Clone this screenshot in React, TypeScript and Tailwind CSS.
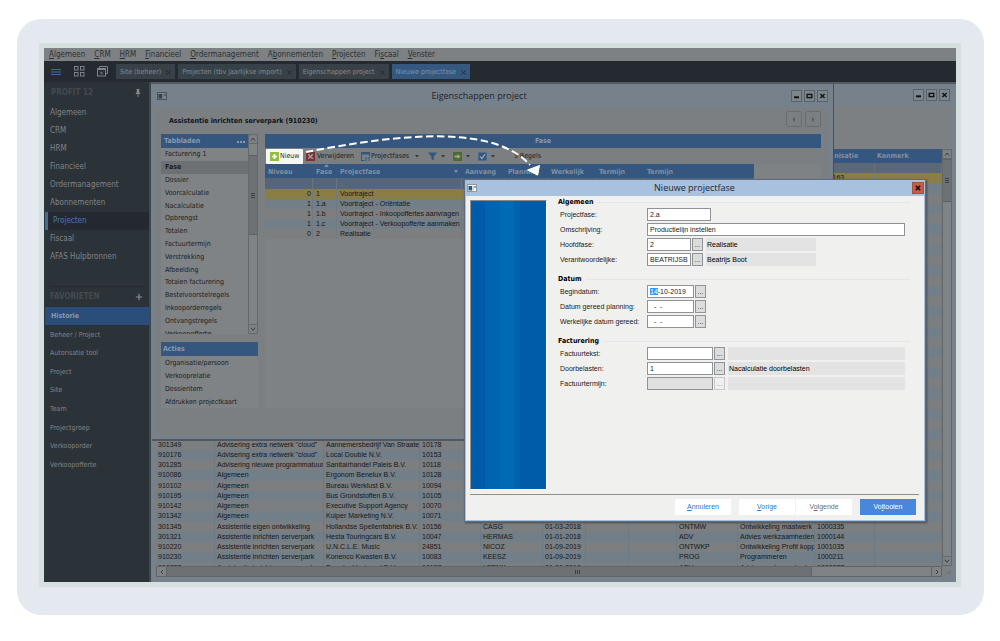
import { useEffect, useRef } from "react";
import type { ReactNode } from "react";

const menuItems: [string, string, string][] = [
  ["", "A", "lgemeen"],
  ["", "C", "RM"],
  ["", "H", "RM"],
  ["", "F", "inancieel"],
  ["", "O", "rdermanagement"],
  ["A", "b", "onnementen"],
  ["", "P", "rojecten"],
  ["Fi", "s", "caal"],
  ["", "V", "enster"],
];

const openTabs = ["Site (beheer)", "Projecten (tbv jaarlijkse import)", "Eigenschappen project", "Nieuwe projectfase"];

const navItems = ["Algemeen", "CRM", "HRM", "Financieel", "Ordermanagement", "Abonnementen", "Projecten", "Fiscaal", "AFAS Hulpbronnen"];

const favourites = ["Beheer / Project", "Autorisatie tool", "Project", "Site", "Team", "Projectgroep", "Verkooporder", "Verkoopofferte"];

const sheets = [
  "Facturering 1", "Fase", "Dossier", "Voorcalculatie", "Nacalculatie", "Opbrengst", "Totalen", "Factuurtermijn",
  "Verstrekking", "Afbeelding", "Totalen facturering", "Bestelvoorstelregels", "Inkooporderregels", "Ontvangstregels", "Verkoopofferte",
];

const actions = ["Organisatie/persoon", "Verkooprelatie", "Dossieritem", "Afdrukken projectkaart"];

const phases = [
  ["0", "1", "Voortraject"],
  ["1", "1.a", "Voortraject - Oriëntatie"],
  ["1", "1.b", "Voortraject - Inkoopoffertes aanvragen"],
  ["1", "1.c", "Voortraject - Verkoopofferte aanmaken"],
  ["0", "2", "Realisatie"],
];

const blankProjects: string[][] = Array.from({ length: 26 }, (_, i) => [
  "", "", "", "", "", "", "", "", "", "", i === 0 ? "1000163" : "", "",
]);

const projects: string[][] = [
  ...blankProjects,
  ["301349", 'Advisering extra netwerk "cloud"', "Aannemersbedrijf Van Straaten", "10178", "", "", "", "", "", "", "", ""],
  ["910176", 'Advisering extra netwerk "cloud"', "Local Double N.V.", "10153", "", "", "", "", "", "", "", ""],
  ["301285", "Advisering nieuwe programmatuur e", "Sanitairhandel Paleis B.V.", "10118", "", "", "", "", "", "", "", ""],
  ["910086", "Algemeen", "Ergonom Benelux B.V.", "10128", "", "", "", "", "", "", "", ""],
  ["910102", "Algemeen", "Bureau Werklust B.V.", "10094", "", "", "", "", "", "", "", ""],
  ["910195", "Algemeen", "Bus Grondstoffen B.V.", "10105", "", "", "", "", "", "", "", ""],
  ["910142", "Algemeen", "Executive Support Agency", "10070", "", "", "", "", "", "", "", ""],
  ["301342", "Algemeen", "Kuiper Marketing N.V.", "10071", "", "", "", "", "", "", "", ""],
  ["301345", "Assistentie eigen ontwikkeling", "Hollandse Spellenfabriek B.V.", "10156", "CASG", "01-03-2018", "", "", "ONTMW", "Ontwikkeling maatwerk", "1000335", ""],
  ["301321", "Assistentie inrichten serverpark", "Hesta Touringcars B.V.", "10047", "HERMAS", "01-01-2018", "", "", "ADV", "Advies werkzaamheden", "1000144", ""],
  ["910220", "Assistentie inrichten serverpark", "U.N.C.L.E. Music", "24851", "NICOZ", "01-09-2019", "", "", "ONTWKP", "Ontwikkeling Profit kopp", "1001035", ""],
  ["910230", "Assistentie inrichten serverpark", "Konenco Kwasten B.V.", "10083", "KEESZ", "01-09-2019", "", "", "PROG", "Programmeren", "1000211", ""],
  ["910232", "Assistentie inrichten serverpark", "Broeder Vastgoed B.V.", "10157", "LEENK", "01-09-2019", "", "", "ADV", "Advies werkzaamheden", "1000237", ""],
];

function WindowIcon({ bright }: { bright?: boolean }) {
  return (
    <svg viewBox="0 0 10 8" className="h-2 w-[10px] shrink-0" aria-hidden="true">
      <rect x="0.5" y="0.5" width="9" height="7" fill={bright ? "#f4f6f8" : "#80868b"} stroke={bright ? "#8d98a5" : "#4d5358"} />
      <rect x="1.5" y="2" width="3.5" height="4.5" fill={bright ? "#2e5878" : "#2d4350"} />
      <rect x="5.5" y="2" width="1" height="4.5" fill={bright ? "#9cb7cf" : "#5d7584"} />
      <rect x="7.5" y="2" width="1" height="2" fill={bright ? "#555" : "#3a3f42"} />
    </svg>
  );
}

function WindowButtons() {
  const cls = "flex h-3 w-[11px] items-center justify-center border border-[#59626b] bg-[#7d858d]";
  return (
    <div className="flex gap-[2px]">
      <button aria-label="Minimaliseren" className={cls}>
        <svg viewBox="0 0 9 10" className="h-[10px] w-[9px]"><path d="M2 6.3h5" stroke="#121416" strokeWidth="2" /></svg>
      </button>
      <button aria-label="Maximaliseren" className={cls}>
        <svg viewBox="0 0 9 10" className="h-[10px] w-[9px]"><rect x="2.2" y="3.4" width="4.6" height="3.2" fill="none" stroke="#121416" strokeWidth="1.4" /></svg>
      </button>
      <button aria-label="Sluiten" className={cls}>
        <svg viewBox="0 0 9 10" className="h-[10px] w-[9px]"><path d="M2.4 3l4.2 4M6.6 3l-4.2 4" stroke="#121416" strokeWidth="1.5" /></svg>
      </button>
    </div>
  );
}

function Chevron({ dir }: { dir: "up" | "down" | "left" | "right" }) {
  const paths = { up: "M2 5.5l2-2.5 2 2.5", down: "M2 2.8l2 2.5 2-2.5", left: "M5 2L3 4l2 2", right: "M3 2l2 2-2 2" };
  return <svg viewBox="0 0 8 8" className="h-2 w-2"><path d={paths[dir]} fill="none" stroke="#3b4044" strokeWidth="1" /></svg>;
}

function Caret() {
  return <svg viewBox="0 0 4 3" className="h-[3px] w-1" aria-hidden="true"><path d="M0 0h4L2 2.6z" fill="#33383c" /></svg>;
}

function VerticalScroll({ thumb, before }: { thumb: string; before: string }) {
  return (
    <div className="flex w-[10px] shrink-0 flex-col border-x border-[#65696c] bg-[#808385]">
      <button aria-label="Omhoog" className="flex h-[10px] items-center justify-center border-y border-[#65696c] bg-[#7e8183]"><Chevron dir="up" /></button>
      <div className={before} />
      <div className={`flex flex-col items-center justify-center gap-px border-y border-[#5b6063] bg-[#6d7173] ${thumb}`}>
        <i className="h-px w-1 bg-[#3b4044]" />
        <i className="h-px w-1 bg-[#3b4044]" />
        <i className="h-px w-1 bg-[#3b4044]" />
      </div>
      <div className="flex-1" />
      <button aria-label="Omlaag" className="flex h-[10px] items-center justify-center border-y border-[#65696c] bg-[#7e8183]"><Chevron dir="down" /></button>
    </div>
  );
}

function Sidebar() {
  return (
    <nav className="flex w-[107px] shrink-0 flex-col border-r-2 border-[#3f474e] bg-[#2b3238] pl-px text-[8px] text-[#818487]">
      <div className="flex h-[22px] items-center justify-between pr-2 pl-[6px] font-bold text-[#444b52]">
        PROFIT 12
        <svg viewBox="0 0 6 8" className="h-2 w-[6px]" aria-hidden="true">
          <path d="M1.5 0h3v.8H4.2V3.2L5.4 4.4v.7H.6v-.7l1.2-1.2V.8h-.3z" fill="#858a8e" />
          <path d="M3 5v3" stroke="#858a8e" strokeWidth=".9" />
        </svg>
      </div>
      <ul>
        {navItems.map((n) => (
          <li key={n}>
            <a href="#" className={n === "Projecten" ? "flex h-[18px] items-center border-l-[3px] border-[#3f6c96] bg-[#242931] pl-[5px] text-[#4a78ad]" : "flex h-[18px] items-center pl-[5px]"}>{n}</a>
          </li>
        ))}
      </ul>
      <hr className="mx-[5px] mt-5 border-[#242a30]" />
      <div className="flex h-[20px] items-center justify-between pr-[6px] pl-[5px] font-bold text-[#444b52]">
        FAVORIETEN
        <button aria-label="Favoriet toevoegen" className="flex">
          <svg viewBox="0 0 8 8" className="h-2 w-2"><path d="M4 .8v6.4M.8 4h6.4" stroke="#8b9094" strokeWidth="1.1" /></svg>
        </button>
      </div>
      <a href="#" className="flex h-[18px] items-center bg-[#2b4d79] pl-[6px] text-[7px] font-bold text-[#8d99a8]">Historie</a>
      <ul className="flex h-[149px] flex-col text-[7px]">
        {favourites.map((f) => (
          <li key={f} className="flex flex-1 items-center pt-px pl-[5px]"><a href="#">{f}</a></li>
        ))}
      </ul>
    </nav>
  );
}

function ProjectListWindow() {
  const heads = ["", "", "", "", "", "", "", "", "", "", "Organisatie", "Kenmerk"];
  return (
    <section aria-label="Projecten" className="absolute inset-0 flex flex-col border-t-2 border-[#555c63] bg-[#77818b] pr-1 pb-[5px] pl-[5px]">
      <div className="flex h-[22px] items-start justify-end pt-[5px] pr-[2px]"><WindowButtons /></div>
      <div className="flex min-h-0 flex-1 flex-col bg-[#7c8083] pt-[43px]">
        <div className="flex min-h-0 flex-1">
          <div className="min-w-0 flex-1 overflow-hidden">
            <table className="h-[424px] w-full table-fixed border-separate border-spacing-0 text-left font-['Liberation_Sans',Arial,sans-serif] text-[7px] leading-[10px] whitespace-nowrap text-[#16181a]">
              <colgroup>
                <col className="w-[59px]" /><col className="w-[109px]" /><col className="w-[96px]" /><col className="w-[61px]" />
                <col className="w-[62px]" /><col className="w-[43px]" /><col className="w-[43px]" /><col className="w-[48px]" />
                <col className="w-[61px]" /><col className="w-[77px]" /><col className="w-[60px]" /><col />
              </colgroup>
              <thead>
                <tr className="h-[14px] bg-[#34567f] font-['DejaVu_Sans_Condensed','DejaVu_Sans',sans-serif] text-[#8090a3]">
                  {heads.map((h, i) => <th key={i} className="p-0 pl-[2px] font-bold">{h}</th>)}
                </tr>
                <tr className="h-[10px] bg-[#5b6977]">
                  {heads.map((_, i) => <td key={i} className="border-r border-[#66727e] p-0" />)}
                </tr>
              </thead>
              <tbody>
                {projects.map((row, r) => (
                  <tr key={r} className={r === 0 ? "bg-[#8a7d45]" : r % 2 ? "bg-[#727e88]" : "bg-[#7c7e7f]"}>
                    {row.map((c, i) => (
                      <td key={i} className="overflow-hidden border-r border-[#6d7983] p-0 pl-[2px]">{c || "\u00a0"}</td>
                    ))}
                  </tr>
                ))}
              </tbody>
            </table>
          </div>
          <VerticalScroll before="h-0" thumb="h-[43px]" />
        </div>
        <div className="flex h-[11px]">
          <div className="flex flex-1 border border-[#606568] bg-[#808385]">
            <button aria-label="Naar links" className="flex w-[10px] items-center justify-center border-r border-[#606568]"><Chevron dir="left" /></button>
            <div className="flex min-w-0 flex-[644] border-r border-[#606568] bg-[#6d7173]">
              <div className="flex w-full items-center justify-center gap-px pl-44">
                <i className="h-1 w-px bg-[#3b4044]" />
                <i className="h-1 w-px bg-[#3b4044]" />
                <i className="h-1 w-px bg-[#3b4044]" />
              </div>
            </div>
            <div className="flex-[119]" />
            <button aria-label="Naar rechts" className="flex w-[10px] items-center justify-center border-l border-[#606568]"><Chevron dir="right" /></button>
          </div>
          <svg viewBox="0 0 10 10" className="h-[10px] w-[10px]" aria-hidden="true"><path d="M8 4v4M6 6v2M4 7v1" stroke="#6b7073" /></svg>
        </div>
      </div>
    </section>
  );
}

function PhaseToolbar() {
  return (
    <div className="flex h-4 items-center text-[7px] text-[#1b1d1f]">
      <button className="ml-px flex h-[15px] w-[37px] items-center gap-px rounded-[1px] bg-[#f6f7f5] pl-1 text-[#2a2a2a]">
        <svg viewBox="0 0 9 9" className="h-[9px] w-[9px] shrink-0"><rect width="9" height="9" rx=".5" fill="#8fc03c" /><path d="M4.5 2v5M2 4.5h5" stroke="#fff" strokeWidth="1.6" /></svg>
        Nieuw
      </button>
      <button className="ml-[3px] flex items-center gap-[2px]">
        <svg viewBox="0 0 9 9" className="h-[9px] w-[9px]"><rect width="9" height="9" fill="#7b3134" /><path d="M2.2 2.2l4.6 4.6M6.8 2.2L2.2 6.8" stroke="#9aa0a2" strokeWidth="1.5" /></svg>
        Verwijderen
      </button>
      <button className="ml-[7px] flex items-center">
        <svg viewBox="0 0 10 9" className="h-[9px] w-[10px]"><rect x=".5" y=".5" width="8" height="8" fill="#76828c" stroke="#34567f" /><path d="M.5 1.5h8" stroke="#34567f" strokeWidth="2" /><path d="M3.500 4.500h6.500v4.500H3.500z" fill="#76828c" /><path d="M4 6h6M4 8h6" stroke="#34567f" strokeDasharray="2 1" /></svg>
        Projectfases
        <span className="ml-[6px]"><Caret /></span>
      </button>
      <button aria-label="Filter" className="ml-[9px] flex items-center gap-1">
        <svg viewBox="0 0 9 9" className="h-[9px] w-[9px]"><path d="M0 .5h9L5.8 4.4V8.6L3.4 7V4.4z" fill="#34567f" /></svg>
        <Caret />
      </button>
      <button aria-label="Exporteren" className="ml-2 flex items-center gap-1">
        <svg viewBox="0 0 9 9" className="h-[9px] w-[9px]"><rect width="9" height="9" rx=".5" fill="#4c6b2e" /><path d="M1.500 4.500h3.500" stroke="#a3ab9f" strokeWidth="1.600" /><path d="M4.500 2l3 2.500-3 2.500z" fill="#a3ab9f" /></svg>
        <Caret />
      </button>
      <button aria-label="Selecteren" className="ml-2 flex items-center gap-1">
        <svg viewBox="0 0 9 9" className="h-[9px] w-[9px]"><rect x=".5" y=".5" width="8" height="8" fill="#34567f" stroke="#4c6c92" /><path d="M2 4.4l2 2.2 3-4.4" fill="none" stroke="#a3adb8" strokeWidth="1.2" /></svg>
        <Caret />
      </button>
      <span className="ml-[19px]">5 Regels</span>
    </div>
  );
}

function PhaseTable() {
  const heads = ["Niveau", "Fase", "Projectfase", "Aanvang", "Planning", "Werkelijk", "Termijn", "Termijn"];
  return (
    <div className="flex">
      <table className="w-[489px] table-fixed border-separate border-spacing-0 text-left font-['Liberation_Sans',Arial,sans-serif] text-[7px] leading-[10px] whitespace-nowrap text-[#16181a]">
        <colgroup>
          <col className="w-[48px]" /><col className="w-6" /><col className="w-[125px]" /><col className="w-[43px]" />
          <col className="w-[43px]" /><col className="w-[48px]" /><col className="w-[48px]" /><col />
        </colgroup>
        <thead>
          <tr className="h-[14px] bg-[#34567f] font-['DejaVu_Sans_Condensed','DejaVu_Sans',sans-serif] text-[#8090a3]">
            {heads.map((h, i) => (
              <th key={i} className="p-0 pt-px pl-[3px] font-bold">
                <div className="relative flex items-center justify-between pr-1">
                  {h}
                  {i === 1 && <svg viewBox="0 0 5 3" className="absolute -top-[3px] left-2 h-[3px] w-[5px]"><path d="M0 3h5L2.5 0z" fill="#8090a3" /></svg>}
                  {i === 2 && <svg viewBox="0 0 4 3" className="h-[3px] w-1"><path d="M0 0h4L2 3z" fill="#8090a3" /></svg>}
                </div>
              </th>
            ))}
          </tr>
          <tr className="h-[11px] bg-[#56667a]">
            {heads.map((_, i) => <td key={i} className="border-r border-[#6b7681] p-0" />)}
          </tr>
        </thead>
        <tbody>
          {phases.map((row, r) => (
            <tr key={r} className={r === 0 ? "bg-[#8a7d45]" : r % 2 ? "bg-[#727e88]" : "bg-[#7c7e7f]"}>
              <td className="border-r border-[#6d7983] p-0 pr-px text-right">{row[0]}</td>
              <td className="border-r border-[#6d7983] p-0 pl-[3px]">{row[1]}</td>
              <td className="border-r border-[#6d7983] p-0 pl-[3px]">{row[2]}</td>
              <td colSpan={5} className="p-0" />
            </tr>
          ))}
        </tbody>
      </table>
    </div>
  );
}

function ProjectWindow() {
  return (
    <section aria-label="Eigenschappen project" className="absolute top-0 right-[122px] left-px flex h-[359px] flex-col border-t-2 border-r border-b-2 border-t-[#555c63] border-r-[#474e54] border-b-[#50585f] bg-[#77818b] pr-[5px] pb-1 pl-1">
      <div className="flex h-6 items-center pl-px">
        <WindowIcon />
        <h1 className="flex-1 text-center font-['Open_Sans','Noto_Sans',sans-serif] text-[9px] text-[#202326]">Eigenschappen project</h1>
        <WindowButtons />
      </div>
      <div className="flex min-h-0 flex-1 flex-col bg-[#7b7f82] pr-[7px] pl-[5px]">
        <div className="flex h-[26px] items-center justify-between pl-2 text-[7px] font-bold text-[#121416]">
          Assistentie inrichten serverpark (910230)
          <div className="flex gap-[3px] pb-1">
            <button aria-label="Vorige" className="flex h-4 w-4 items-center justify-center rounded-[2px] border border-[#686c6f]">
              <svg viewBox="0 0 4 5" className="h-[5px] w-1"><path d="M3 0v5L.5 2.5z" fill="#54595d" /></svg>
            </button>
            <button aria-label="Volgende" className="flex h-4 w-4 items-center justify-center rounded-[2px] border border-[#686c6f]">
              <svg viewBox="0 0 4 5" className="h-[5px] w-1"><path d="M1 0v5l2.500-2.500z" fill="#54595d" /></svg>
            </button>
          </div>
        </div>
        <div className="flex gap-[7px] text-[7px] text-[#1b1d1f]">
          <div className="flex w-[97px] shrink-0 flex-col">
            <div className="flex h-[200px]">
              <div className="flex min-w-0 flex-1 flex-col overflow-hidden bg-[#808385]">
                <div className="flex h-[14px] shrink-0 items-center justify-between bg-[#34567f] px-[3px] pt-px font-bold text-[#8b9aad]">
                  Tabbladen
                  <span className="flex gap-px"><i className="size-[2px] bg-[#8b9aad]" /><i className="size-[2px] bg-[#8b9aad]" /><i className="size-[2px] bg-[#8b9aad]" /></span>
                </div>
                <ul className="flex h-[192px] shrink-0 flex-col leading-[11px]">
                  {sheets.map((s) => (
                    <li key={s} className={s === "Fase" ? "flex flex-1 items-center bg-[#6e7173] pt-px pl-1 font-bold" : "flex flex-1 items-center pt-px pl-1"}>{s}</li>
                  ))}
                </ul>
              </div>
              <VerticalScroll before="h-[11px]" thumb="h-20" />
            </div>
            <div className="mt-2 bg-[#808385]">
              <h2 className="flex h-[14px] items-center bg-[#34567f] pt-px pl-[2px] font-bold text-[#8b9aad]">Acties</h2>
              <ul>
                {actions.map((a) => <li key={a} className="flex h-[13px] items-center pt-px pl-1">{a}</li>)}
              </ul>
            </div>
          </div>
          <div className="flex min-w-0 flex-1 flex-col bg-[#7f8284]">
            <h2 className="flex h-[14px] items-center justify-center bg-[#34567f] pt-px font-bold text-[#8b9aad]">Fase</h2>
            <div className="bg-[#7b7f82]"><PhaseToolbar /></div>
            <PhaseTable />
          </div>
        </div>
      </div>
    </section>
  );
}

function Group({ title, children }: { title: string; children: ReactNode }) {
  return (
    <fieldset className="flex flex-col">
      <legend className="contents">
        <span className="flex h-[11px] items-center gap-1 pt-[2px] font-['DejaVu_Sans_Condensed','DejaVu_Sans',sans-serif] text-[7px] font-bold text-black">
          {title}
          <i className="mr-[10px] h-px flex-1 bg-[#e2e5ea]" />
        </span>
      </legend>
      {children}
    </fieldset>
  );
}

const field = "h-[13px] border border-[#8f9397] bg-white px-[2px] font-['Liberation_Sans',Arial,sans-serif] text-[7px] text-[#1a1a1a] outline-none selection:bg-[#3399ff] selection:text-white";

function Row({ id, label, children }: { id: string; label: string; children: ReactNode }) {
  return (
    <div className="flex h-[15px] items-center">
      <label htmlFor={id} className="w-[89px] shrink-0 pt-[2px] pl-[2px] text-[#1a1a1a]">{label}</label>
      {children}
    </div>
  );
}

function Lookup({ name, disabled }: { name: string; disabled?: boolean }) {
  return (
    <button aria-label={name} disabled={disabled} className={disabled ? "ml-px h-[13px] w-[11px] border border-[#c8c8c8] bg-[#f0f0f0] text-center leading-[9px] text-[#9a9a9a]" : "ml-px h-[13px] w-[11px] border border-[#8f9397] bg-[#dcdcdc] text-center leading-[9px] text-[#333]"}>...</button>
  );
}

function PhaseDialog() {
  const begin = useRef<HTMLInputElement>(null);
  useEffect(() => {
    begin.current?.focus();
    begin.current?.setSelectionRange(0, 2);
  }, []);
  const wizardButton = "h-4 w-14 bg-white text-[#3079d0]";
  return (
    <section role="dialog" aria-label="Nieuwe projectfase" className="absolute top-[97px] left-[313px] flex h-[343px] w-[462px] flex-col border border-[#5d6c7e] bg-[#a8c1df] p-px pt-0 font-['Liberation_Sans',Arial,sans-serif] text-[7px] shadow-[1px_1px_2px_rgba(0,0,0,0.4)]">
      <div className="flex h-4 shrink-0 items-center pl-px">
        <WindowIcon bright />
        <h2 className="flex-1 text-center font-['Open_Sans','Noto_Sans',sans-serif] text-[9px] text-[#1d2733]">Nieuwe projectfase</h2>
        <button aria-label="Sluiten" className="flex h-3 w-3 items-center justify-center border border-[#a8503f] bg-[#cb5b46]">
          <svg viewBox="0 0 8 8" className="h-2 w-2"><path d="M1.800 1.800l4.400 4.400M6.200 1.800L1.800 6.200" stroke="#111" strokeWidth="1.600" /></svg>
        </button>
      </div>
      <div className="flex flex-1 flex-col bg-[#f0f0ef] px-1">
        <div className="flex flex-1">
          <div className="mt-1 mb-1 w-[77px] shrink-0 border-t border-r border-b border-l border-t-[#888] border-r-white border-b-white border-l-[#999] bg-[linear-gradient(90deg,#005ca9_0_18%,#0064b0_18%_38%,#006ab5_38%_58%,#0063af_58%_66%,#005ca9_66%)]" />
          <form className="ml-[11px] flex min-w-0 flex-1 flex-col gap-[6px]">
            <Group title="Algemeen">
              <Row id="phase" label="Projectfase:"><input id="phase" defaultValue="2.a" className={`${field} w-16`} /></Row>
              <Row id="description" label="Omschrijving:"><input id="description" defaultValue="Productielijn instellen" className={`${field} mr-[15px] min-w-0 flex-1`} /></Row>
              <Row id="parent" label="Hoofdfase:">
                <input id="parent" defaultValue="2" className={`${field} w-11`} />
                <Lookup name="Hoofdfase zoeken" />
                <output className="ml-[3px] h-[13px] w-[110px] bg-[#e3e3e3] pl-px leading-[13px]">Realisatie</output>
              </Row>
              <Row id="owner" label="Verantwoordelijke:">
                <input id="owner" defaultValue="BEATRIJSB" className={`${field} w-11`} />
                <Lookup name="Verantwoordelijke zoeken" />
                <output className="ml-[3px] h-[13px] w-[110px] bg-[#e3e3e3] pl-px leading-[13px]">Beatrijs Boot</output>
              </Row>
            </Group>
            <Group title="Datum">
              <Row id="begin" label="Begindatum:">
                <input id="begin" ref={begin} defaultValue="14-10-2019" className={`${field} w-[47px] border-[#5b94d6]`} />
                <Lookup name="Begindatum kiezen" />
              </Row>
              <Row id="planned" label="Datum gereed planning:">
                <input id="planned" defaultValue="  -  -" className={`${field} w-[47px]`} />
                <Lookup name="Datum gereed planning kiezen" />
              </Row>
              <Row id="actual" label="Werkelijke datum gereed:">
                <input id="actual" defaultValue="  -  -" className={`${field} w-[47px]`} />
                <Lookup name="Werkelijke datum kiezen" />
              </Row>
            </Group>
            <Group title="Facturering">
              <Row id="text" label="Factuurtekst:">
                <input id="text" className={`${field} w-[66px]`} />
                <Lookup name="Factuurtekst zoeken" />
                <output className="mr-[15px] ml-[3px] h-[13px] flex-1 bg-[#e3e3e3]" />
              </Row>
              <Row id="charge" label="Doorbelasten:">
                <input id="charge" defaultValue="1" className={`${field} w-[66px]`} />
                <Lookup name="Doorbelasten zoeken" />
                <output className="mr-[15px] ml-[3px] h-[13px] flex-1 bg-[#e3e3e3] pl-px leading-[13px]">Nacalculatie doorbelasten</output>
              </Row>
              <Row id="term" label="Factuurtermijn:">
                <input id="term" disabled className="h-[13px] w-[66px] border border-[#8f9397] bg-[#e0e0e0]" />
                <Lookup name="Factuurtermijn zoeken" disabled />
                <output className="mr-[15px] ml-[3px] h-[13px] flex-1 bg-[#e3e3e3]" />
              </Row>
            </Group>
          </form>
        </div>
        <div className="mr-px flex h-[26px] items-start justify-end border-t border-[#8f8f8f] pt-1 pr-[3px]">
          <button className={wizardButton}><u>A</u>nnuleren</button>
          <button className={`${wizardButton} ml-2`}><u>V</u>orige</button>
          <button className="ml-px h-4 w-14 bg-white text-[#6d6d6d]">V<u>o</u>lgende</button>
          <button className="ml-2 h-4 w-14 bg-[#4788dd] text-white">Vo<u>l</u>tooien</button>
        </div>
      </div>
    </section>
  );
}

export default function App() {
  return (
    <div className="flex min-h-screen flex-col bg-white px-4 pt-[19px] pb-[26px] pl-[17px] font-['DejaVu_Sans_Condensed','DejaVu_Sans',sans-serif]">
      <div className="flex flex-1 flex-col rounded-3xl bg-[#e4e9f0] px-[23px] py-[24px] pb-[28px] pl-[22px]">
        <main className="flex flex-1 flex-col border-[5px] border-[#d5dfdf]">
          <div className="flex h-[13px] items-center gap-[9px] bg-[#7e8183] pt-px pl-[5px] text-[8px] leading-[12px] whitespace-nowrap text-[#2b3034]">
            {menuItems.map(([a, b, c]) => <a href="#" key={b + c}>{a}<u>{b}</u>{c}</a>)}
          </div>
          <div className="flex h-[21px] items-center bg-[#252a31] text-[7px] whitespace-nowrap">
            <button aria-label="Menu" className="ml-[7px] flex">
              <svg viewBox="0 0 10 8" className="h-2 w-[10px]"><path d="M0 1.500h10M0 4h10M0 6.500h10" stroke="#3f6ea6" strokeWidth="1.200" /></svg>
            </button>
            <button aria-label="Overzicht" className="ml-[13px] flex">
              <svg viewBox="0 0 11 11" className="h-[11px] w-[11px]" fill="none" stroke="#7c8388"><rect x=".5" y=".5" width="3.500" height="3.500" /><rect x="6.500" y=".5" width="3.500" height="3.500" /><rect x=".5" y="6.500" width="3.500" height="3.500" /><rect x="6.500" y="6.500" width="3.500" height="3.500" /></svg>
            </button>
            <button aria-label="Vensters sluiten" className="ml-3 flex">
              <svg viewBox="0 0 11 11" className="h-[11px] w-[11px]" fill="none" stroke="#7c8388"><path d="M2.500 2V.5h8v7H9" /><rect x=".5" y="2.500" width="8" height="7.500" /><path d="M.5 3.500h8" /><path d="M3 5.500l3 3M6 5.500l-3 3" strokeWidth=".9" /></svg>
            </button>
            <div className="ml-2 flex gap-[3px]">
              {openTabs.map((t) => (
                <a href="#" key={t} className={t === "Nieuwe projectfase" ? "flex h-[15px] items-center gap-[5px] bg-[#34587f] px-1 pt-px text-[#7e93ac]" : "flex h-[15px] items-center gap-[5px] bg-[#394148] px-1 pt-px text-[#858a8e]"}>
                  {t}
                  <svg viewBox="0 0 5 5" className="h-[5px] w-[5px]"><path d="M.5.5l4 4M4.500.5l-4 4" stroke="#1d2226" strokeWidth=".9" /></svg>
                </a>
              ))}
            </div>
          </div>
          <div className="flex flex-1">
            <Sidebar />
            <div className="relative min-w-0 flex-1 overflow-hidden">
              <ProjectListWindow />
              <ProjectWindow />
              <PhaseDialog />
              <svg viewBox="0 0 240 45" className="pointer-events-none absolute top-[51px] left-[153px] h-[45px] w-[240px]" aria-hidden="true">
                <path d="M2 19C76 5 186 -13 226 32" fill="none" stroke="#fff" strokeWidth="2" strokeDasharray="7.500 3.500" />
                <path d="M223.500 37l12-4.500-2 9.500z" fill="#fff" stroke="#fff" strokeLinejoin="round" />
              </svg>
            </div>
          </div>
        </main>
      </div>
    </div>
  );
}
